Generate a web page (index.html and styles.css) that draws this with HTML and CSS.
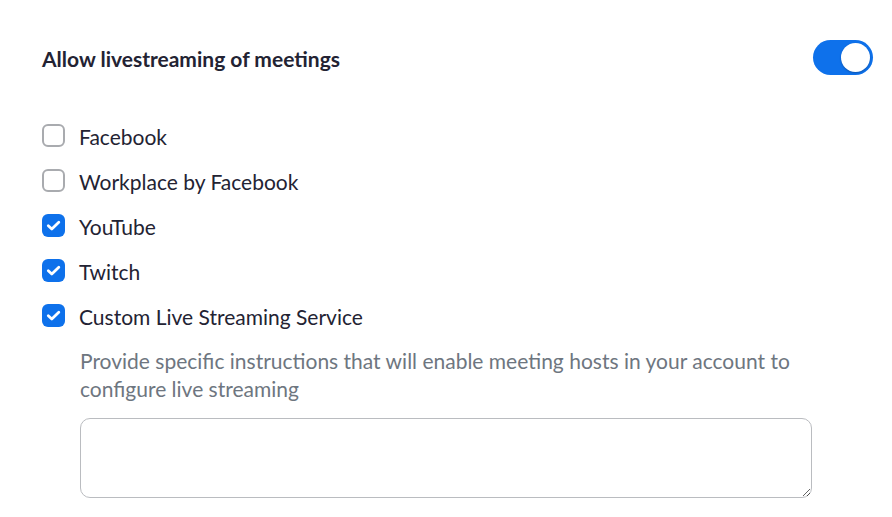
FILE: index.html
```html
<!DOCTYPE html>
<html>
    <head>
        <title>livestreaming</title>
        <link rel="stylesheet" href="styles.css">
    </head>
    <body>
        <div class="container">
            <div class="settingHeader">
                <div class="settingTitle">Allow livestreaming of meetings</div>
                <div class="toggle on"><span class="knob"></span></div>
            </div>
            <ul class="options">
                <li class="option">
                    <span class="box"></span>
                    <span class="label">Facebook</span>
                </li>
                <li class="option">
                    <span class="box"></span>
                    <span class="label">Workplace by Facebook</span>
                </li>
                <li class="option">
                    <span class="box checked">
                        <svg viewBox="0 0 23 23" width="23" height="23"><path d="M6.3 11.8 L9.8 15 L16.8 8.2" fill="none" stroke="#fff" stroke-width="2.8" stroke-linecap="round" stroke-linejoin="round"/></svg>
                    </span>
                    <span class="label">YouTube</span>
                </li>
                <li class="option">
                    <span class="box checked">
                        <svg viewBox="0 0 23 23" width="23" height="23"><path d="M6.3 11.8 L9.8 15 L16.8 8.2" fill="none" stroke="#fff" stroke-width="2.8" stroke-linecap="round" stroke-linejoin="round"/></svg>
                    </span>
                    <span class="label">Twitch</span>
                </li>
                <li class="option">
                    <span class="box checked">
                        <svg viewBox="0 0 23 23" width="23" height="23"><path d="M6.3 11.8 L9.8 15 L16.8 8.2" fill="none" stroke="#fff" stroke-width="2.8" stroke-linecap="round" stroke-linejoin="round"/></svg>
                    </span>
                    <span class="label">Custom Live Streaming Service</span>
                </li>
            </ul>
            <div class="custom">
                <p class="hint">Provide specific instructions that will enable meeting hosts in your account to configure live streaming</p>
                <textarea class="instructions"></textarea>
            </div>
        </div>
    </body>
</html>
```

FILE: styles.css
```css
html,body {
    margin:0;
    background: #fff;
}
.container {
    display: flex;
    flex-direction: column;
    padding: 40px 19px 0 42px;
    font-family: Lato, "Open Sans", sans-serif;
    color: #232333;
}
/* 제목 + 토글 */
.settingHeader {
    display: flex;
    justify-content: space-between;
    align-items: center;
    height: 35px;
}
.settingTitle {
    font-size: 21px;
    font-weight: 700;
    padding-top: 2px;
}
.toggle {
    width: 60px;
    height: 35px;
    border-radius: 18px;
    background-color: #c1c3c6;
    box-sizing: border-box;
    padding: 3px;
    display: flex;
}
.toggle.on {
    background-color: #0e71eb;
    justify-content: flex-end;
}
.knob {
    width: 29px;
    height: 29px;
    border-radius: 50%;
    background: #fff;
    box-shadow: 0 1px 2px rgba(0, 0, 0, 0.25);
}
/* 체크박스 목록 */
.options {
    list-style: none;
    margin: 39px 0 0 0;
    padding: 0;
}
.option {
    display: flex;
    align-items: center;
    height: 45px;
}
.box {
    width: 23px;
    height: 23px;
    box-sizing: border-box;
    border: 2px solid #a9abaf;
    border-radius: 6px;
    margin-right: 14px;
    margin-bottom: 2px;
    display: flex;
}
.box.checked {
    border: none;
    background: #0e71eb;
}
.label {
    font-size: 21px;
}
.custom {
    padding-left: 38px;
}
.hint {
    margin: 8px 0 15px 0;
    font-size: 21px;
    line-height: 28px;
    color: #6e7680;
    max-width: 720px;
}
.instructions {
    display: block;
    width: 732px;
    height: 80px;
    box-sizing: border-box;
    border: 1px solid #babcc0;
    border-radius: 10px;
    font-family: Lato, sans-serif;
    font-size: 16px;
    padding: 8px 12px;
}
```
